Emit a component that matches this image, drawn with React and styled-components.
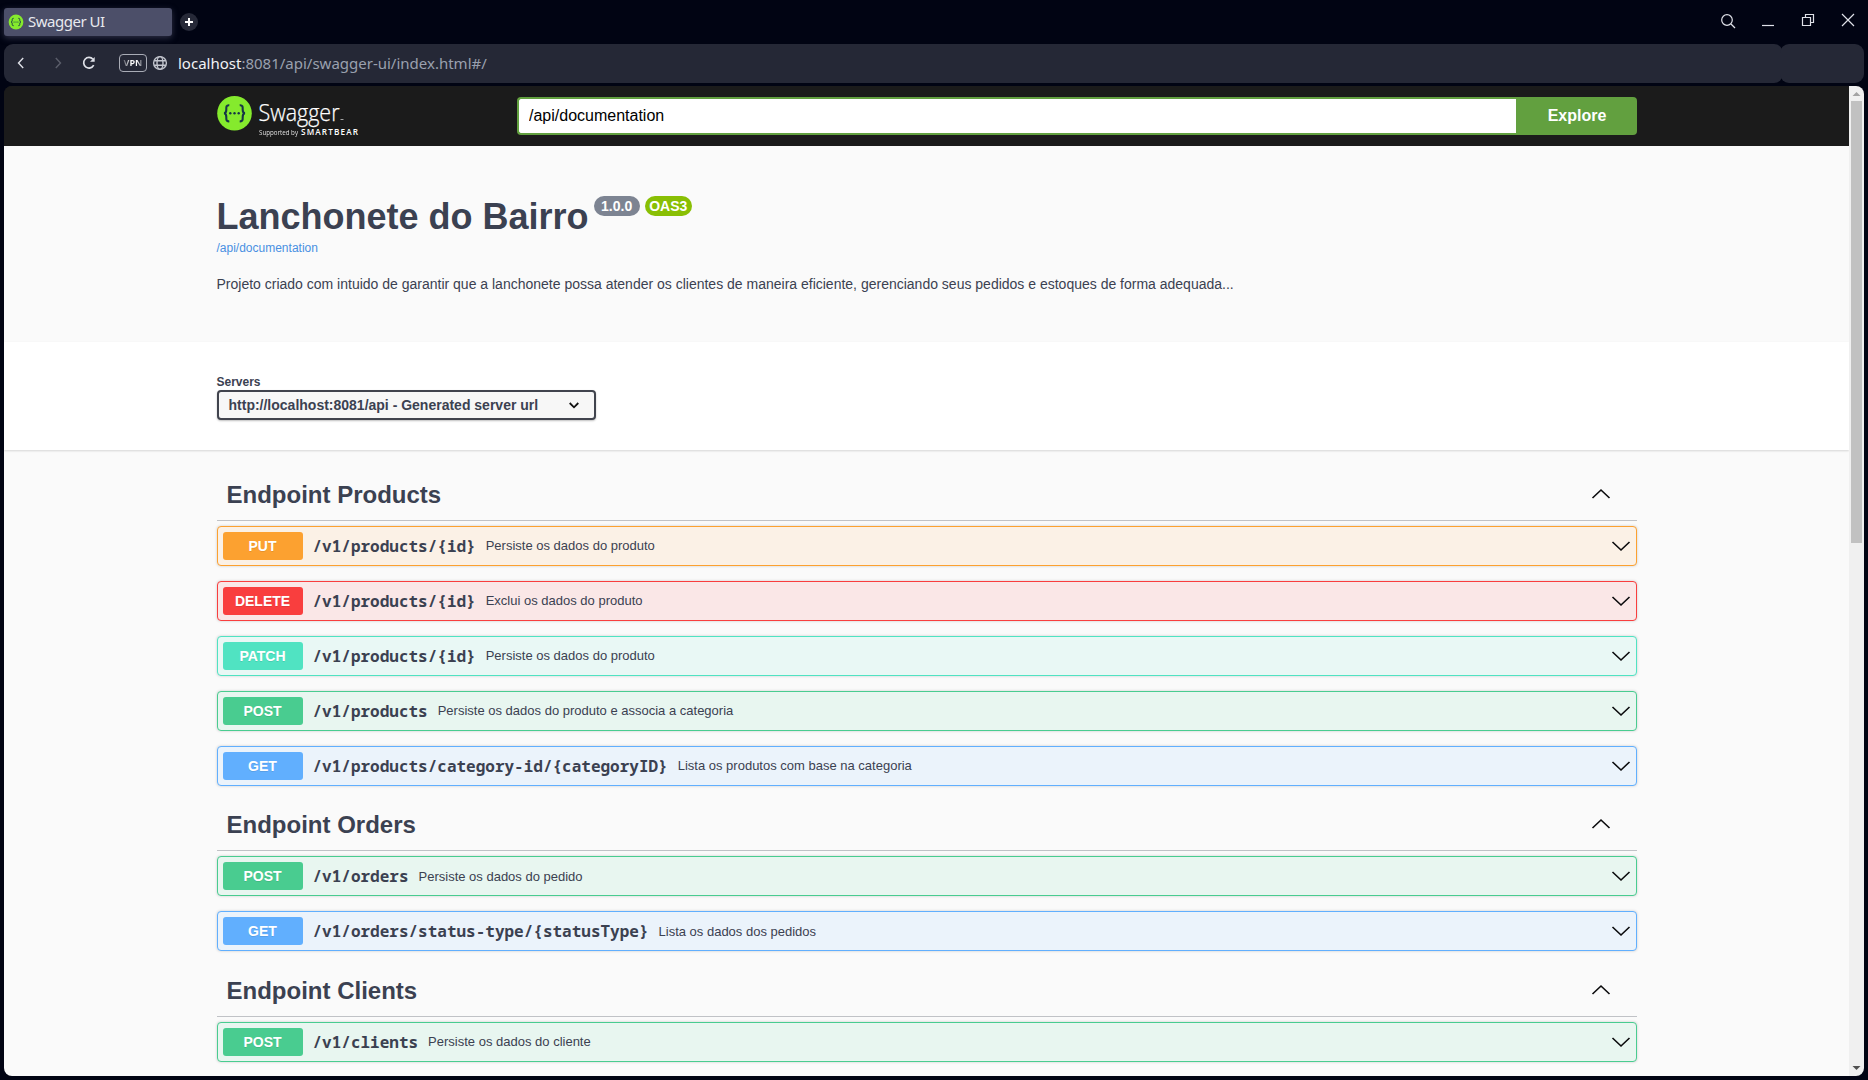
import React from "react";
import styled, { createGlobalStyle } from "styled-components";

const GlobalStyle = createGlobalStyle`
  *, *::before, *::after { box-sizing: border-box; }
  body { margin: 0; background: #010413; overflow: hidden; }
  button, input { font-family: inherit; }
`;

const Window = styled.div`
  display: flex;
  flex-direction: column;
  width: 1868px;
  height: 1080px;
  padding: 0 4px 4px;
  overflow: hidden;
  background: #010413;
  color: #e8e9ee;
  font-family: "Noto Sans", sans-serif;
`;

const TabStrip = styled.div`
  display: flex;
  align-items: center;
  flex: none;
  height: 44px;
`;

const Tab = styled.div`
  display: flex;
  align-items: center;
  gap: 4px;
  width: 168px;
  height: 28px;
  padding: 0 4px;
  border-radius: 3px;
  background: #4c4f69;
  box-shadow: 0 2px 6px rgba(76, 79, 105, 0.6);
  font-size: 15px;
  letter-spacing: -0.48px;
  line-height: 26px;
`;

const TabTitle = styled.span`
  padding-bottom: 2px;
`;

const NewTab = styled.button`
  display: grid;
  place-items: center;
  width: 18px;
  height: 18px;
  margin-left: 8px;
  padding: 0;
  border: 0;
  border-radius: 50%;
  background: #262938;
`;

const WindowControls = styled.div`
  display: flex;
  align-items: center;
  gap: 20px;
  height: 20px;
  margin: 0 6px 3px auto;
`;

const Control = styled.svg`
  display: block;
  width: 20px;
  height: 20px;
  fill: none;
  stroke: #dfe1e8;
  stroke-width: 1.2;
`;

const Toolbar = styled.div`
  display: flex;
  flex: none;
  height: 39px;
  margin-bottom: 3px;
`;

const AddressBar = styled.div`
  display: flex;
  align-items: center;
  flex: 1;
  padding-left: 7px;
  border-radius: 9px;
  background: #252836;
`;

const ToolbarEnd = styled.div`
  width: 84px;
  margin-left: -3px;
  border-radius: 9px;
  background: #252836;
`;

const NavIcon = styled.svg`
  display: block;
  flex: none;
  width: 20px;
  height: 20px;
  margin-right: ${(p) => p.$gap || 0}px;
  margin-bottom: 1px;
  fill: none;
  stroke: ${(p) => p.$color || "#dfe1e8"};
  stroke-width: 1.4;
`;

const VpnBadge = styled.span`
  width: 28px;
  height: 18px;
  margin-right: 3px;
  margin-bottom: 1px;
  border: 1.5px solid #a9acb6;
  border-radius: 4px;
  font: 700 9px/15px "Noto Sans", sans-serif;
  text-align: center;
  color: transparent;
  background: linear-gradient(90deg, #4a4d59 10%, #ffffff 42%, #ffffff 66%, #3b3e4c 92%);
  background-clip: text;
  -webkit-background-clip: text;
`;

const Url = styled.span`
  margin-left: 8px;
  padding-bottom: 2px;
  font-size: 15px;
  line-height: 20px;
  color: #9aa0ae;
`;

const UrlHost = styled.span`
  color: #f1f2f5;
`;

const Viewport = styled.div`
  display: flex;
  flex: 1;
  min-height: 0;
  overflow: hidden;
  border-radius: 8px;
`;

const Page = styled.div`
  flex: 1;
  min-width: 0;
  overflow: hidden;
  background: linear-gradient(#1b1b1b 60px, #fafafa 60px);
  color: #3b4151;
  font-family: "Liberation Sans", Arial, sans-serif;
`;

const Wrapper = styled.div`
  max-width: 1460px;
  margin: 0 auto;
  padding: 0 20px;
`;

const Topbar = styled.header`
  height: 60px;
  background: #1b1b1b;
`;

const TopbarRow = styled(Wrapper)`
  display: flex;
  align-items: center;
  height: 60px;
`;

const Logo = styled.svg`
  display: block;
  flex: none;
  width: 300.5px;
  height: 60px;
`;

const SpecInput = styled.input`
  flex: 1;
  height: 38px;
  margin: 0;
  padding: 0 10px;
  border: 2px solid #62a03f;
  border-right: 0;
  border-radius: 4px 0 0 4px;
  outline: none;
  background: #fff;
  color: #000;
  font-size: 16px;
`;

const ExploreButton = styled.button`
  width: 121px;
  height: 38px;
  padding: 0 0 0 2px;
  border: 0;
  border-radius: 0 4px 4px 0;
  background: #62a03f;
  color: #fff;
  font-size: 16px;
  font-weight: 700;
`;

const Info = styled(Wrapper).attrs({ as: "section" })`
  height: 196px;
  padding-top: 50px;
`;

const Title = styled.h2`
  display: flex;
  align-items: flex-start;
  gap: 5px;
  margin: 0;
  font-size: 36px;
  line-height: 42px;
`;

const Version = styled.span`
  padding: 0 ${(p) => p.$pad}px;
  border-radius: 57px;
  background: ${(p) => p.$color};
  color: #fff;
  font-size: 14px;
  line-height: 20px;
`;

const SpecLink = styled.a`
  display: block;
  margin-top: 3px;
  color: #4990e2;
  font-size: 12px;
  line-height: 14px;
`;

const Description = styled.p`
  margin: 21px 0 0;
  font-size: 14px;
  line-height: 17px;
`;

const SchemeContainer = styled.section`
  height: 108px;
  margin-bottom: 20.1px;
  padding-top: 33px;
  background: #fff;
  box-shadow: 0 1px 2px rgba(0, 0, 0, 0.15);
`;

const ServersLabel = styled.div`
  font-size: 12px;
  font-weight: 700;
  line-height: 14px;
`;

const Select = styled.div`
  display: flex;
  align-items: center;
  justify-content: space-between;
  width: 379px;
  height: 30px;
  margin-top: 1px;
  padding: 0 12px 0 10px;
  border: 2px solid #41444e;
  border-radius: 4px;
  background: #f7f7f7;
  box-shadow: 0 1px 2px rgba(0, 0, 0, 0.25);
  font-size: 14px;
  font-weight: 700;
`;

const TagHeader = styled.h3`
  display: flex;
  align-items: center;
  justify-content: space-between;
  height: 50.5px;
  margin: 0 0 5px;
  padding: 0 26px 0 10px;
  border-bottom: 1px solid rgba(59, 65, 81, 0.3);
  font-size: 24px;
  line-height: 28px;
`;

const Operation = styled.div`
  display: flex;
  align-items: center;
  height: 40px;
  margin-bottom: 15px;
  padding: 5px;
  border: 1px solid ${(p) => p.$color};
  border-radius: 4px;
  background: ${(p) => p.$tint};
  box-shadow: 0 0 3px rgba(0, 0, 0, 0.19);
`;

const Method = styled.span`
  width: 80px;
  height: 28px;
  border-radius: 3px;
  background: ${(p) => p.$color};
  color: #fff;
  font-size: 14px;
  font-weight: 700;
  line-height: 28px;
  text-align: center;
  text-shadow: 0 1px 0 rgba(0, 0, 0, 0.1);
`;

const Path = styled.span`
  padding: 0 10px;
  font-family: "Noto Sans Mono", "DejaVu Sans Mono", monospace;
  font-size: 16px;
  font-weight: 700;
  line-height: 22px;
`;

const Summary = styled.span`
  flex: 1;
  font-size: 13px;
  line-height: 15px;
`;

const Arrow = styled.svg`
  display: block;
  flex: none;
  width: 20px;
  height: 20px;
  margin-bottom: ${(p) => (p.$up ? 2 : 0)}px;
  fill: none;
  stroke: #0a0a0c;
  stroke-width: 1.6;
  transform: ${(p) => (p.$up ? "rotate(180deg)" : "none")};
`;

const Scrollbar = styled.div`
  display: flex;
  flex-direction: column;
  justify-content: space-between;
  width: 15px;
  background: #f0f0f0;
`;

const ScrollThumb = styled.div`
  width: 11px;
  height: 442px;
  margin: 0 2px auto;
  background: #c1c1c1;
`;

const ScrollArrow = styled.svg`
  display: block;
  width: 15px;
  height: 15px;
  fill: ${(p) => p.$color};
`;

const METHODS = {
  PUT: { color: "#fca130", tint: "#fbf1e6" },
  DELETE: { color: "#f93e3e", tint: "#fae7e7" },
  PATCH: { color: "#50e3c2", tint: "#e9f8f5" },
  POST: { color: "#49cc90", tint: "#e8f6f0" },
  GET: { color: "#61affe", tint: "#ebf3fb" },
};

const TAGS = [
  {
    name: "Endpoint Products",
    operations: [
      ["PUT", "/v1/products/{id}", "Persiste os dados do produto"],
      ["DELETE", "/v1/products/{id}", "Exclui os dados do produto"],
      ["PATCH", "/v1/products/{id}", "Persiste os dados do produto"],
      ["POST", "/v1/products", "Persiste os dados do produto e associa a categoria"],
      ["GET", "/v1/products/category-id/{categoryID}", "Lista os produtos com base na categoria"],
    ],
  },
  {
    name: "Endpoint Orders",
    operations: [
      ["POST", "/v1/orders", "Persiste os dados do pedido"],
      ["GET", "/v1/orders/status-type/{statusType}", "Lista os dados dos pedidos"],
    ],
  },
  {
    name: "Endpoint Clients",
    operations: [["POST", "/v1/clients", "Persiste os dados do cliente"]],
  },
];

function Chevron({ up }) {
  return (
    <Arrow viewBox="0 0 20 20" $up={up}>
      <path d="M1.5 6 L10 14 L18.5 6" />
    </Arrow>
  );
}

function BracesMark() {
  return (
    <>
      <path d="M-5.2 -8 C-8.6 -8.4 -8.2 -5.8 -8.2 -3.6 Q-8.2 -0.4 -10.4 0 Q-8.2 0.4 -8.2 3.6 C-8.2 5.8 -8.6 8.4 -5.2 8" fill="none" stroke="#173647" strokeWidth="2.1" />
      <path d="M5.2 -8 C8.6 -8.4 8.2 -5.8 8.2 -3.6 Q8.2 -0.4 10.4 0 Q8.2 0.4 8.2 3.6 C8.2 5.8 8.6 8.4 5.2 8" fill="none" stroke="#173647" strokeWidth="2.1" />
      <circle cx="-4.2" cy="0" r="1.2" fill="#173647" />
      <circle cx="0" cy="0" r="1.2" fill="#173647" />
      <circle cx="4.2" cy="0" r="1.2" fill="#173647" />
    </>
  );
}

function SwaggerLogo() {
  return (
    <Logo viewBox="0 0 300.5 60">
      <g transform="translate(17.5 27.3)">
        <circle r="17.3" fill="#85ea2d" />
        <BracesMark />
      </g>
      <g fill="#fff" fontFamily="Open Sans, Noto Sans, sans-serif">
        <text x="41.5" y="34.6" fontSize="23.5" fontWeight="300" stroke="#fff" strokeWidth="0.25" textLength="81" lengthAdjust="spacingAndGlyphs">Swagger</text>
        <rect x="123.5" y="33" width="3" height="1" opacity="0.6" />
        <text x="42" y="49" fontSize="6.4" opacity="0.85" textLength="39" lengthAdjust="spacingAndGlyphs">Supported by</text>
        <text x="84" y="49" fontSize="8.2" fontWeight="600" textLength="57">SMARTBEAR</text>
      </g>
    </Logo>
  );
}

function BrowserChrome() {
  return (
    <>
      <TabStrip>
        <Tab>
          <svg width="16" height="16" viewBox="-8 -8 16 16">
            <circle r="7.4" fill="#85ea2d" />
            <g transform="scale(0.46)"><BracesMark /></g>
          </svg>
          <TabTitle>Swagger UI</TabTitle>
        </Tab>
        <NewTab aria-label="New tab">
          <svg width="8" height="8" viewBox="0 0 8 8">
            <path d="M4 0V8M0 4H8" stroke="#fff" strokeWidth="2" />
          </svg>
        </NewTab>
        <WindowControls>
          <Control viewBox="0 0 20 20"><circle cx="9" cy="9" r="5.3" /><path d="M13 13L17 17" /></Control>
          <Control viewBox="0 0 20 20"><path d="M4 14.5H16" /></Control>
          <Control viewBox="0 0 20 20"><path d="M4.5 6.5H12.5V14.5H4.5Z M7.5 6.5V3.5H15.5V11.5H12.5" /></Control>
          <Control viewBox="0 0 20 20"><path d="M4 3L16 15M16 3L4 15" /></Control>
        </WindowControls>
      </TabStrip>
      <Toolbar>
        <AddressBar>
          <NavIcon viewBox="0 0 20 20" $gap={17}><path d="M12.2 5L7.5 10L12.2 15" /></NavIcon>
          <NavIcon viewBox="0 0 20 20" $gap={11} $color="#5b5e6b"><path d="M7.8 5L12.5 10L7.8 15" /></NavIcon>
          <NavIcon viewBox="0 0 20 20" $gap={20}>
            <path d="M14.7 12.2A5.3 5.3 0 1 1 14 6.3" strokeWidth="1.7" />
            <path d="M15.7 4V8.8H11Z" fill="#dfe1e8" stroke="none" />
          </NavIcon>
          <VpnBadge>VPN</VpnBadge>
          <NavIcon viewBox="0 0 20 20" $color="#c3c6ce">
            <circle cx="10" cy="10" r="6.4" />
            <ellipse cx="10" cy="10" rx="3" ry="6.4" />
            <path d="M4.2 7.7H15.8M4.2 12.3H15.8" />
          </NavIcon>
          <Url><UrlHost>localhost</UrlHost>:8081/api/swagger-ui/index.html#/</Url>
        </AddressBar>
        <ToolbarEnd />
      </Toolbar>
    </>
  );
}

export default function App() {
  return (
    <Window>
      <GlobalStyle />
      <BrowserChrome />
      <Viewport>
        <Page>
          <Topbar>
            <TopbarRow>
              <SwaggerLogo />
              <SpecInput defaultValue="/api/documentation" />
              <ExploreButton>Explore</ExploreButton>
            </TopbarRow>
          </Topbar>
          <Info>
            <Title>
              Lanchonete do Bairro
              <Version $color="#7d8492" $pad={7.5}>1.0.0</Version>
              <Version $color="#89bf04" $pad={4.5}>OAS3</Version>
            </Title>
            <SpecLink>/api/documentation</SpecLink>
            <Description>
              Projeto criado com intuido de garantir que a lanchonete possa atender os clientes de maneira eficiente, gerenciando seus pedidos e estoques de forma adequada...
            </Description>
          </Info>
          <SchemeContainer>
            <Wrapper>
              <ServersLabel>Servers</ServersLabel>
              <Select>
                http://localhost:8081/api - Generated server url
                <svg width="16" height="16" viewBox="0 0 16 16">
                  <path d="M3.7 6L8 10.3L12.3 6" fill="none" stroke="#111" strokeWidth="1.8" />
                </svg>
              </Select>
            </Wrapper>
          </SchemeContainer>
          <Wrapper>
            {TAGS.map((tag) => (
              <section key={tag.name}>
                <TagHeader>
                  {tag.name}
                  <Chevron up />
                </TagHeader>
                {tag.operations.map(([method, path, summary]) => (
                  <Operation key={method + path} $color={METHODS[method].color} $tint={METHODS[method].tint}>
                    <Method $color={METHODS[method].color}>{method}</Method>
                    <Path>{path}</Path>
                    <Summary>{summary}</Summary>
                    <Chevron />
                  </Operation>
                ))}
              </section>
            ))}
          </Wrapper>
        </Page>
        <Scrollbar>
          <ScrollArrow viewBox="0 0 15 15" $color="#a3a3a3"><path d="M3.5 10L7.5 6L11.5 10Z" /></ScrollArrow>
          <ScrollThumb />
          <ScrollArrow viewBox="0 0 15 15" $color="#505050"><path d="M3.5 5L7.5 9L11.5 5Z" /></ScrollArrow>
        </Scrollbar>
      </Viewport>
    </Window>
  );
}
